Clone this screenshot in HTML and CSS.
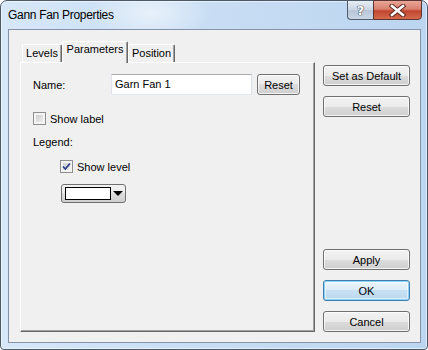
FILE: index.html
```html
<!DOCTYPE html>
<html lang="en">
<head>
    <meta charset="UTF-8">
    <title>Gann Fan Properties</title>
    <link rel="stylesheet" href="styles.css">
</head>
<body>
    <div class="window">
        <div class="titlebar">
            <span class="title">Gann Fan Properties</span>
            <div class="caption">
                <div class="cap-help"><span>?</span></div>
                <div class="cap-close">
                    <svg width="17" height="13" viewBox="0 0 17 13">
                        <path d="M3 2 L14 11 M14 2 L3 11" stroke="#5a2a22" stroke-width="4.6" stroke-linecap="square"/>
                        <path d="M3 2 L14 11 M14 2 L3 11" stroke="#ffffff" stroke-width="2.6" stroke-linecap="square"/>
                    </svg>
                </div>
            </div>
        </div>
        <div class="client">
            <div class="main">
                <div class="tabs">
                    <div class="tab tab-levels">Levels</div>
                    <div class="tab tab-params active">Parameters</div>
                    <div class="tab tab-position">Position</div>
                </div>
                <div class="panel">
                    <div class="row-name">
                        <span class="label-name">Name:</span>
                        <div class="textbox">Garn Fan 1</div>
                        <button class="btn btn-small">Reset</button>
                    </div>
                    <div class="check-row first">
                        <span class="checkbox"></span>
                        <span>Show label</span>
                    </div>
                    <div class="legend">Legend:</div>
                    <div class="check-row indent">
                        <span class="checkbox">
                            <svg width="11" height="11" viewBox="0 0 11 11">
                                <path d="M2 5.5 L4.3 8 L9 2.5" fill="none" stroke="#2b3f8c" stroke-width="1.8"/>
                            </svg>
                        </span>
                        <span>Show level</span>
                    </div>
                    <div class="color-drop">
                        <span class="swatch"></span>
                        <span class="arrow"></span>
                    </div>
                </div>
            </div>
            <div class="side">
                <button class="btn">Set as Default</button>
                <button class="btn">Reset</button>
                <button class="btn apply">Apply</button>
                <button class="btn btn-ok">OK</button>
                <button class="btn">Cancel</button>
            </div>
        </div>
    </div>
</body>
</html>
```

FILE: styles.css
```css
* { box-sizing: border-box; }
body { margin: 0; font-family: "Liberation Sans", Arial, sans-serif; font-size: 11px; color: #000; }

.window {
    width: 428px; height: 350px;
    border: 1px solid #4b5867; border-radius: 7px 7px 4px 4px;
    background:
        radial-gradient(ellipse 60px 30px at 150px 12px, rgba(255,255,255,.55), rgba(255,255,255,0)),
        linear-gradient(90deg, #d6e7f8 0%, #c9def4 45%, #bcd5f0 100%);
    display: flex; flex-direction: column;
    box-shadow: inset 0 0 0 1px rgba(255,255,255,.55);
}

.titlebar { height: 28px; display: flex; align-items: flex-start; }
.title { padding-left: 7px; line-height: 29px; font-size: 12px; letter-spacing: -0.3px; }
.caption { margin-left: auto; margin-right: 5px; margin-top: -1px; display: flex; }
.cap-help {
    width: 26px; height: 20px;
    border: 1px solid #4f5c6c; border-right: none; border-radius: 0 0 0 4px;
    background: linear-gradient(#e6edf5, #ccd7e4 48%, #b6c5d7 52%, #cad6e4);
    display: flex; align-items: center; justify-content: center;
}
.cap-help span {
    color: #fff; font-weight: bold; font-size: 13px; font-family: "DejaVu Sans", sans-serif;
    text-shadow: 0 0 1px #3d4a5a, 0 0 1px #3d4a5a, 0 0 1px #3d4a5a;
}
.cap-close {
    width: 49px; height: 20px;
    border: 1px solid #5a3430; border-radius: 0 0 4px 0;
    background: linear-gradient(#eaa697, #d8806e 45%, #c2452f 55%, #d46a4c);
    display: flex; align-items: center; justify-content: center;
}

.client {
    flex: 1;
    margin: 0 6px 6px 7px;
    border: 1px solid #8594a8;
    background: #f0f0f0;
    display: flex;
    padding: 11px 10px 10px 11px;
}

.main { width: 295px; display: flex; flex-direction: column; }
.tabs { height: 21px; display: flex; align-items: flex-end; padding-left: 2px; position: relative; z-index: 1; }
.tab {
    height: 18px; line-height: 17px; text-align: center;
    border: 1px solid; border-color: #fff #696969 transparent #fff; border-bottom: none;
    border-radius: 2px 2px 0 0;
    box-shadow: inset -1px 0 #a0a0a0;
    background: #f0f0f0;
}
.tab-levels { width: 40px; }
.tab-params { width: 66px; }
.tab-position { width: 47px; }
.tab.active { height: 22px; margin-bottom: -1px; line-height: 15px; }

.panel {
    flex: 1;
    border: 1px solid; border-color: #fff #696969 #696969 #fff;
    box-shadow: inset -1px -1px #a0a0a0;
    padding: 11px 12px;
}

.row-name { display: flex; align-items: center; height: 21px; }
.label-name { width: 78px; }
.textbox {
    width: 141px; height: 21px; line-height: 19px; padding: 0 3px;
    border: 1px solid; border-color: #abadb3 #dbdfe6 #e3e9ef #e2e3ea;
    background: #fff;
}
.btn-small { width: 43px; height: 20px; margin-left: 5px; }

.check-row { display: flex; align-items: center; gap: 4px; height: 13px; margin-top: 11px; }
.check-row.first { margin-top: 17px; }
.check-row.indent { margin-left: 27px; }
.checkbox {
    width: 13px; height: 13px;
    border: 1px solid #8e8f8f;
    background: linear-gradient(135deg, #c6c6c6, #f6f6f6);
    box-shadow: inset 0 0 0 2px #f4f4f4;
}
.checkbox svg { display: block; }
.legend { height: 13px; line-height: 13px; margin-top: 11px; }

.color-drop {
    width: 65px; height: 19px; margin: 11px 0 0 28px;
    border: 1px solid #707070; border-radius: 3px;
    background: linear-gradient(#f2f2f2, #ebebeb 50%, #dddddd 50%, #cfcfcf);
    display: flex; align-items: center; padding-left: 3px;
}
.swatch { width: 46px; height: 13px; border: 1px solid #000; background: #fff; }
.arrow {
    margin-left: 2px; width: 0; height: 0;
    border-left: 5px solid transparent; border-right: 5px solid transparent; border-top: 5px solid #000;
}

.side { width: 87px; margin-left: 8px; display: flex; flex-direction: column; gap: 10px; padding-top: 24px; }
.btn {
    height: 21px; padding: 0;
    font-family: inherit; font-size: 11px; color: #000;
    border: 1px solid #707070; border-radius: 3px;
    background: linear-gradient(#f2f2f2, #ebebeb 50%, #dddddd 50%, #cfcfcf);
    box-shadow: inset 0 0 0 1px rgba(255,255,255,.75);
}
.side .apply { margin-top: auto; }
.btn-ok {
    border-color: #3c7fb1;
    background: linear-gradient(#eaf5fc, #dcecf8 50%, #c7e0f3 50%, #bcd9ef);
    box-shadow: inset 0 0 0 1px #8fd0f5, inset 0 0 0 2px rgba(255,255,255,.5);
}
```
